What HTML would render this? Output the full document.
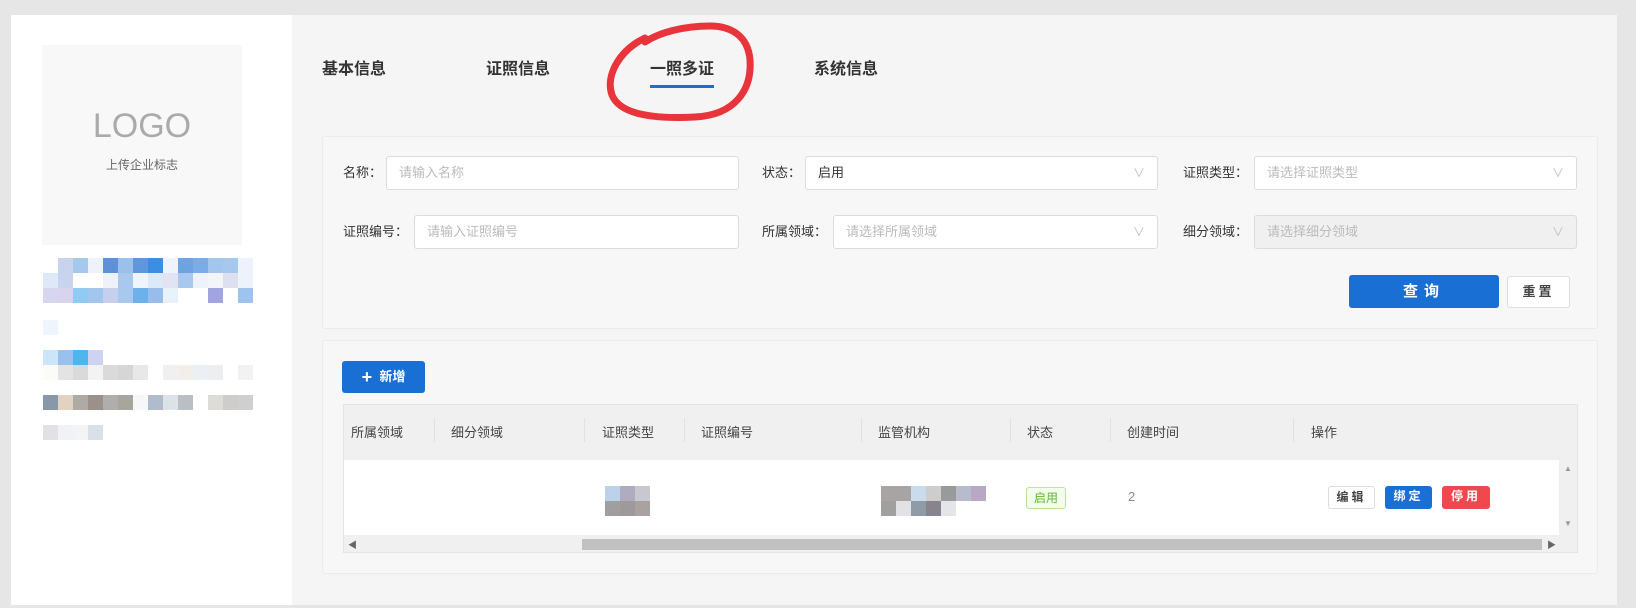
<!DOCTYPE html>
<html><head><meta charset="utf-8"><style>
*{box-sizing:border-box;margin:0;padding:0}
body{width:1636px;height:608px;background:#e6e6e6;font-family:"Liberation Sans","Noto Sans CJK SC",sans-serif;position:relative;overflow:hidden;color:#333}
.a{position:absolute}
.side{left:11px;top:15px;width:281px;height:590px;background:#fff}
.main{left:292px;top:15px;width:1325px;height:590px;background:#f5f5f5}
.logo{left:42px;top:45px;width:200px;height:200px;background:#f8f8f8;text-align:center}
.tab{top:55px;font-size:16px;font-weight:bold;color:#333}
.card{background:#f7f7f7;border:1px solid #ececec;border-radius:3px}
.lbl{font-size:13px;color:#333;line-height:34px}
.inp{background:#fff;border:1px solid #dcdcdc;border-radius:3px;height:34px;font-size:13px;color:#bbb;line-height:32px;padding-left:12px}
.inp .ar{position:absolute;right:12px;top:0;color:#c0c0c0;font-size:12px}
.blk{display:flex;position:absolute;left:43px}
.blk span{width:15px;height:15px;display:block}
.th{top:422px;font-size:13px;color:#444}
.sep{top:418px;width:1px;height:24px;background:#e2e2e2}
.btn{font-size:12px;font-weight:bold;border-radius:3px;text-align:center;height:23px;line-height:21px;top:486px;letter-spacing:3px}
</style></head><body>
<div class="a side"></div>
<div class="a main"></div>
<div class="a logo"><div style="margin-top:62px;font-size:34px;color:#aaa">LOGO</div><div style="margin-top:10px;font-size:12px;color:#666">上传企业标志</div></div>

<div class="blk" style="top:258px"><span style="background:#fff"></span><span style="background:#c8d3ee"></span><span style="background:#a5c8ef"></span><span style="background:#eef3fb"></span><span style="background:#5d92d8"></span><span style="background:#9cc0ec"></span><span style="background:#5f97dd"></span><span style="background:#3b8ee0"></span><span style="background:#eef4fb"></span><span style="background:#6ea3e3"></span><span style="background:#7aace6"></span><span style="background:#a3c6ee"></span><span style="background:#a6c8ef"></span><span style="background:#eef3fb"></span></div>
<div class="blk" style="top:273px"><span style="background:#dde8f8"></span><span style="background:#c8d3ee"></span><span style="background:#fff"></span><span style="background:#fff"></span><span style="background:#eef3fb"></span><span style="background:#a8c8ee"></span><span style="background:#eef5fc"></span><span style="background:#dce9f6"></span><span style="background:#e2e4f3"></span><span style="background:#a8c8ee"></span><span style="background:#eef3fb"></span><span style="background:#f3f5fb"></span><span style="background:#dde0ef"></span><span style="background:#eef3fb"></span></div>
<div class="blk" style="top:288px"><span style="background:#d6d6ee"></span><span style="background:#d9d4ee"></span><span style="background:#8fcbf2"></span><span style="background:#a3c6ee"></span><span style="background:#c6cfee"></span><span style="background:#a8c8ee"></span><span style="background:#6eb0ea"></span><span style="background:#99bceb"></span><span style="background:#e7f2fb"></span><span style="background:#fff"></span><span style="background:#fff"></span><span style="background:#a0a5e0"></span><span style="background:#fff"></span><span style="background:#9cc4ee"></span></div>
<div class="blk" style="top:320px"><span style="background:#eef5fd"></span></div>
<div class="blk" style="top:350px"><span style="background:#cde5f9"></span><span style="background:#99c1ee"></span><span style="background:#4db6ee"></span><span style="background:#cfd3f2"></span></div>
<div class="blk" style="top:365px"><span style="background:#fcfbf8"></span><span style="background:#e3e3e3"></span><span style="background:#dadada"></span><span style="background:#f3f3f3"></span><span style="background:#dadada"></span><span style="background:#d6d6d6"></span><span style="background:#e8e8e8"></span><span style="background:#fff"></span><span style="background:#f0f0f0"></span><span style="background:#f3efe8"></span><span style="background:#eceff3"></span><span style="background:#edeef0"></span><span style="background:#fff"></span><span style="background:#f2f2f2"></span></div>
<div class="blk" style="top:395px"><span style="background:#8898a8"></span><span style="background:#e3d2c0"></span><span style="background:#aeaaa6"></span><span style="background:#9c908a"></span><span style="background:#b0aeab"></span><span style="background:#a7a59c"></span><span style="background:#f6f8f8"></span><span style="background:#b0bccc"></span><span style="background:#dde2e8"></span><span style="background:#babfc6"></span><span style="background:#fff"></span><span style="background:#dddcd6"></span><span style="background:#cfcdcb"></span><span style="background:#cfcfcf"></span></div>
<div class="blk" style="top:425px"><span style="background:#e2e2e4"></span><span style="background:#f0f2f5"></span><span style="background:#f3f4f6"></span><span style="background:#d9e0e8"></span></div>

<div class="a tab" style="left:322px">基本信息</div>
<div class="a tab" style="left:486px">证照信息</div>
<div class="a tab" style="left:650px">一照多证</div>
<div class="a tab" style="left:814px">系统信息</div>
<div class="a" style="left:650px;top:85px;width:64px;height:3px;background:#1a6fd4"></div>
<svg class="a" style="left:600px;top:20px" width="170" height="110"><path d="M45 18 C20 30 5 55 12 75 C20 95 55 99 95 97 C135 95 152 70 150 40 C148 15 130 6 110 6 C85 6 60 12 45 22" fill="none" stroke="#e8343a" stroke-width="7" stroke-linecap="round"/></svg>

<div class="a card" style="left:322px;top:136px;width:1276px;height:193px"></div>
<div class="a lbl" style="left:343px;top:156px">名称：</div>
<div class="a inp" style="left:386px;top:156px;width:353px">请输入名称</div>
<div class="a lbl" style="left:762px;top:156px">状态：</div>
<div class="a inp" style="left:805px;top:156px;width:353px;color:#333">启用<span class="ar">∨</span></div>
<div class="a lbl" style="left:1183px;top:156px">证照类型：</div>
<div class="a inp" style="left:1254px;top:156px;width:323px">请选择证照类型<span class="ar">∨</span></div>
<div class="a lbl" style="left:343px;top:215px">证照编号：</div>
<div class="a inp" style="left:414px;top:215px;width:325px">请输入证照编号</div>
<div class="a lbl" style="left:762px;top:215px">所属领域：</div>
<div class="a inp" style="left:833px;top:215px;width:325px">请选择所属领域<span class="ar">∨</span></div>
<div class="a lbl" style="left:1183px;top:215px">细分领域：</div>
<div class="a inp" style="left:1254px;top:215px;width:323px;background:#f0f0f0">请选择细分领域<span class="ar">∨</span></div>
<div class="a" style="left:1349px;top:275px;width:150px;height:33px;background:#1a6fd4;border-radius:3px;color:#fff;font-weight:bold;font-size:15px;text-align:center;line-height:33px;letter-spacing:6px">查询</div>
<div class="a" style="left:1507px;top:276px;width:63px;height:32px;background:#fff;border:1px solid #ddd;border-radius:3px;font-weight:bold;font-size:13px;text-align:center;line-height:30px;letter-spacing:3px;color:#444">重置</div>

<div class="a card" style="left:322px;top:340px;width:1276px;height:234px"></div>
<div class="a" style="left:342px;top:361px;width:83px;height:32px;background:#1a6fd4;border-radius:3px;color:#fff;font-weight:bold;font-size:13px;text-align:center;line-height:32px"><span style="font-size:18px;vertical-align:-2px">+</span>&nbsp; 新增</div>
<div class="a" style="left:343px;top:404px;width:1235px;height:149px;background:#f0f0f0;border:1px solid #e4e4e4"></div>
<div class="a" style="left:344px;top:460px;width:1215px;height:75px;background:#fff"></div>
<div class="a th" style="left:351px">所属领域</div>
<div class="a th" style="left:451px">细分领域</div>
<div class="a th" style="left:602px">证照类型</div>
<div class="a th" style="left:701px">证照编号</div>
<div class="a th" style="left:878px">监管机构</div>
<div class="a th" style="left:1027px">状态</div>
<div class="a th" style="left:1127px">创建时间</div>
<div class="a th" style="left:1311px">操作</div>
<div class="a sep" style="left:434px"></div><div class="a sep" style="left:584px"></div><div class="a sep" style="left:684px"></div><div class="a sep" style="left:861px"></div><div class="a sep" style="left:1010px"></div><div class="a sep" style="left:1110px"></div><div class="a sep" style="left:1293px"></div>
<div class="a" style="left:605px;top:486px;display:flex;flex-wrap:wrap;width:45px"><span style="width:15px;height:15px;background:#bcd2e8"></span><span style="width:15px;height:15px;background:#b1abc0"></span><span style="width:15px;height:15px;background:#c8c8d0"></span><span style="width:15px;height:15px;background:#a09e9e"></span><span style="width:15px;height:15px;background:#9e9a9c"></span><span style="width:15px;height:15px;background:#aaa2a0"></span></div>
<div class="a" style="left:881px;top:486px;display:flex;flex-wrap:wrap;width:105px"><span style="width:30px;height:15px;background:#a8a4a4"></span><span style="width:15px;height:15px;background:#c8dcec"></span><span style="width:15px;height:15px;background:#cfcdcc"></span><span style="width:15px;height:15px;background:#999a9b"></span><span style="width:15px;height:15px;background:#b7bccc"></span><span style="width:15px;height:15px;background:#b8a8c4"></span><span style="width:15px;height:15px;background:#a0a0a0"></span><span style="width:15px;height:15px;background:#e0e2e6"></span><span style="width:15px;height:15px;background:#8f9ca8"></span><span style="width:15px;height:15px;background:#88848f"></span><span style="width:15px;height:15px;background:#e4e5e8"></span></div>
<div class="a" style="left:1026px;top:487px;width:40px;height:22px;border:1px solid #b7e59a;background:#f4fdec;color:#5cb82c;font-size:12px;text-align:center;line-height:20px;border-radius:3px">启用</div>
<div class="a" style="left:1128px;top:489px;font-size:13px;color:#888">2</div>
<div class="a btn" style="left:1328px;width:47px;background:#fff;border:1px solid #ddd;color:#444">编辑</div>
<div class="a btn" style="left:1385px;width:47px;background:#1a6fd4;color:#fff">绑定</div>
<div class="a btn" style="left:1442px;width:48px;background:#f0484e;color:#fff">停用</div>
<div class="a" style="left:1559px;top:460px;width:18px;height:75px;background:#f0f0f0;font-size:8px;color:#999;text-align:center"><div style="margin-top:4px">▲</div><div style="margin-top:46px">▼</div></div>
<div class="a" style="left:344px;top:535px;width:1233px;height:17px;background:#f0f0f0"></div>
<div class="a" style="left:348px;top:538px;font-size:9px;color:#666">◀</div>
<div class="a" style="left:1547px;top:538px;font-size:9px;color:#666">▶</div>
<div class="a" style="left:582px;top:539px;width:960px;height:11px;background:#c1c1c1"></div>
</body></html>
